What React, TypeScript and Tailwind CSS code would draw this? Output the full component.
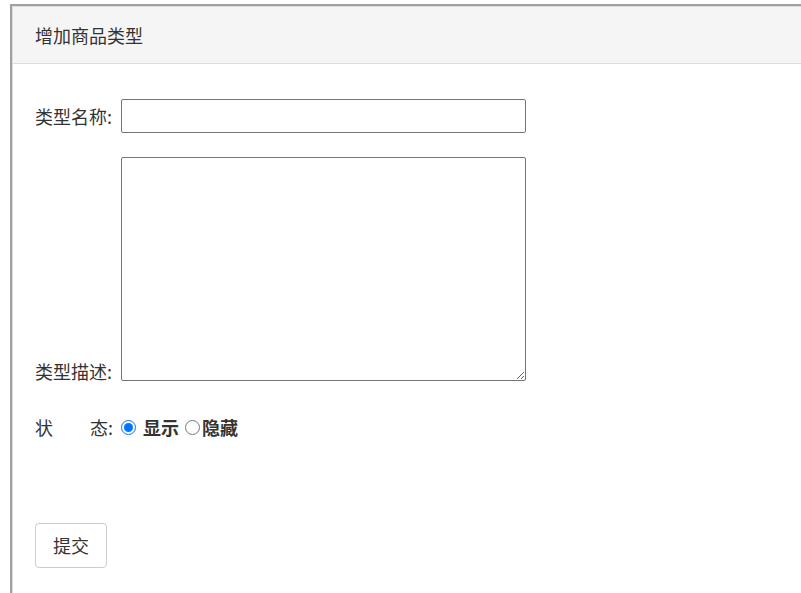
export default function App() {
  const f = { fontFamily: '"Noto Sans CJK SC", "Noto Sans", sans-serif' };
  return (
    <div className="w-[801px] h-[593px] bg-white overflow-hidden text-[#333]" style={f}>
      <div className="ml-[10px] mt-[4px] h-[600px] border-l-2 border-t-2 border-[#a0a0a0]">
        <div className="h-full border-l border-t border-[#ddd]">
          <div className="h-[57px] bg-[#f5f5f5] border-b border-[#ddd] pl-[22px] flex items-center text-[18px]">增加商品类型</div>
          <div className="pl-[22px] pt-[35px]">
            <div className="flex items-center h-[34px] text-[18px]">
              <span className="w-[86px]">类型名称:</span>
              <input className="w-[405px] h-[34px] border border-[#767676] rounded-[2px]" />
            </div>
            <div className="flex items-end mt-[24px] text-[18px]">
              <span className="w-[86px] leading-[20px] pb-[0px]">类型描述:</span>
              <textarea className="w-[405px] h-[224px] border border-[#767676] rounded-[2px] block" />
            </div>
            <div className="flex items-center mt-[34px] text-[18px] h-[24px]">
              <span className="w-[55px]">状</span>
              <span className="w-[31px]">态:</span>
              <input type="radio" defaultChecked name="s" className="w-[15px] h-[15px] m-0 accent-[#0075ff]" />
              <b className="ml-[7px]">显示</b>
              <input type="radio" name="s" className="w-[15px] h-[15px] m-0 ml-[6px]" />
              <b className="ml-[2px]">隐藏</b>
            </div>
            <button className="mt-[84px] w-[72px] h-[45px] border border-[#ccc] rounded-[4px] bg-white text-[18px]">提交</button>
          </div>
        </div>
      </div>
    </div>
  );
}
